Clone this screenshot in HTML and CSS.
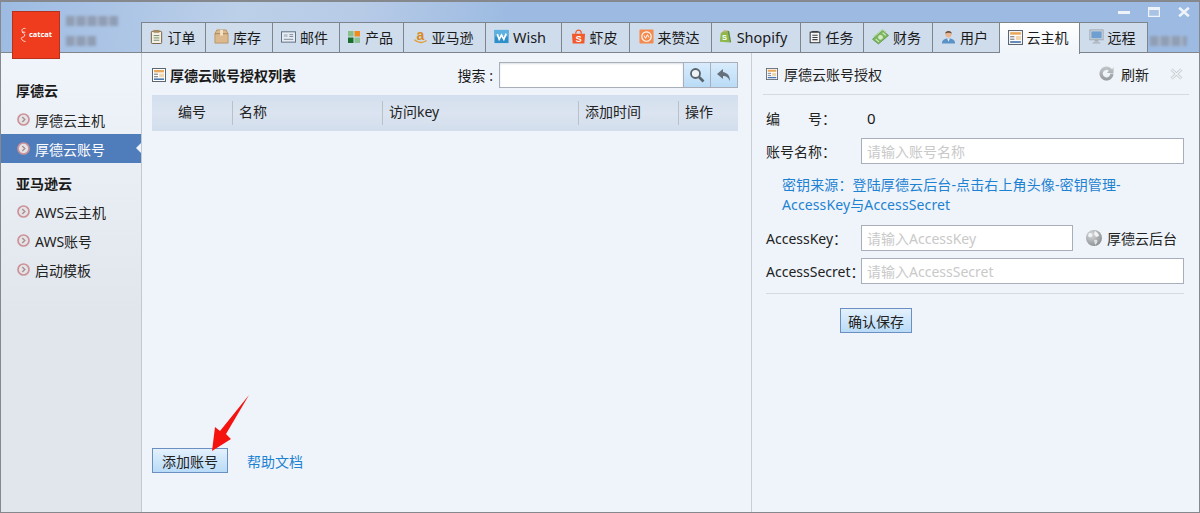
FILE: index.html
```html
<!DOCTYPE html>
<html lang="zh-CN">
<head>
<meta charset="utf-8">
<title>catcat</title>
<link rel="stylesheet" href="styles.css">
</head>
<body>
<svg class="defs" width="0" height="0" aria-hidden="true">
  <defs>
    <radialGradient id="g-globe" cx=".35" cy=".3" r=".8"><stop offset="0" stop-color="#d9dbdd"/><stop offset="1" stop-color="#85898d"/></radialGradient>
    <linearGradient id="g-refresh" x1="0" y1="0" x2="0" y2="1"><stop offset="0" stop-color="#c4c7ca"/><stop offset="1" stop-color="#96999d"/></linearGradient>
  </defs>
  <symbol id="i-panel" viewBox="0 0 14 14">
    <rect x=".5" y=".5" width="13" height="13" fill="#fff" stroke="#5d6670"/>
    <rect x="2" y="2" width="10" height="2.4" fill="#e8a95c"/>
    <rect x="2" y="5.6" width="4" height="1.3" fill="#8b9099"/>
    <rect x="2" y="8" width="4" height="1.3" fill="#8b9099"/>
    <rect x="7.2" y="5.6" width="4.8" height="3.7" fill="#f0d6ae"/>
    <rect x="2" y="10.4" width="10" height="1.6" fill="#4d78ad"/>
  </symbol>
  <symbol id="i-bullet" viewBox="0 0 13 13">
    <circle cx="6.500" cy="6.500" r="5.500" fill="#e4e3e6" stroke="#cc9298" stroke-width="1.700"/>
    <path d="M5.300 4 7.800 6.500 5.300 9" fill="none" stroke="#a98f93" stroke-width="1.400"/>
  </symbol>
</svg>
<div class="window">
  <header class="header">
    <div class="brand">
      <div class="logo">
        <svg class="logo-mark" width="7" height="16" viewBox="0 0 7 16"><path d="M5.500 1.500C3 1 1 2.500 2.500 5s3 2 2 4-4 .5-3 3 4 2.500 4 2.500M2 5.500c2-1 3-.5 3 .5" fill="none" stroke="#fff" stroke-width=".8"/></svg>
        <span class="logo-text">catcat</span>
      </div>
      <div class="brand-info">
        <span class="blur blur-a"></span>
        <span class="blur blur-b"></span>
      </div>
    </div>
    <div class="header-right">
      <div class="winctl">
        <svg width="12" height="10" viewBox="0 0 12 10"><rect y="4" width="12" height="3" fill="#eef3f9"/></svg>
        <svg width="12" height="10" viewBox="0 0 12 10"><rect x=".6" y=".6" width="10.800" height="8.800" fill="#a9c3e4" stroke="#eef3f9" stroke-width="1.200"/><rect x="1" y="1" width="10" height="2" fill="#eef3f9"/></svg>
        <svg width="12" height="10" viewBox="0 0 12 10"><path d="M1.200.8l9.600 8.400M10.800.8l-9.600 8.400" stroke="#eef3f9" stroke-width="2.600"/></svg>
      </div>
      <div class="tabrow">
        <nav class="tabs">
          <a class="tab">
            <svg class="ti" viewBox="0 0 16 16"><rect x="2.500" y="2.500" width="11" height="13" rx="1" fill="#f4efe2" stroke="#6d5a3e"/><rect x="5" y="1" width="6" height="3" fill="#a58a5c"/><path d="M5 7h6M5 9.500h6M5 12h6" stroke="#6f8a6a"/></svg>
            <span>订单</span></a>
          <a class="tab">
            <svg class="ti" viewBox="0 0 16 16"><path d="M1 5 3 1h10l2 4v10H1z" fill="#dcb98c" stroke="#b8966a"/><path d="M1 5h14" stroke="#a98455"/><rect x="6.500" y="1" width="3" height="6" fill="#f3e3c8"/></svg>
            <span>库存</span></a>
          <a class="tab">
            <svg class="ti" viewBox="0 0 16 16"><rect x=".5" y="3" width="15" height="11" fill="#e6ecf3" stroke="#5c6b7c"/><path d="M9 6h4M9 8h4M3 11h10" stroke="#7d8894"/><rect x="3" y="5.500" width="4" height="3" fill="#b7c4d2"/></svg>
            <span>邮件</span></a>
          <a class="tab">
            <svg class="ti ti-sm" viewBox="0 0 14 14"><rect x="1" y="1" width="5.500" height="5.500" fill="#8abf8a"/><rect x="7.500" y="1" width="5.500" height="5.500" fill="#f08c1e"/><rect x="1" y="7.500" width="5.500" height="5.500" fill="#1c6e2d"/><rect x="7.500" y="7.500" width="5.500" height="5.500" fill="#8cc096"/></svg>
            <span>产品</span></a>
          <a class="tab">
            <svg class="ti ti-open" viewBox="0 0 16 16"><text class="amz" x="8" y="11.500" text-anchor="middle">a</text><path d="M1.500 11.500c4 3.500 9 3.500 13 .8" fill="none" stroke="#e59a2c" stroke-width="1.500"/></svg>
            <span>亚马逊</span></a>
          <a class="tab tab-latin">
            <svg class="ti" viewBox="0 0 16 16"><rect x=".5" y="1" width="15" height="14" fill="#2e8fc9"/><rect x=".5" y="1" width="15" height="7" fill="#5cb1e0"/><path d="M3.500 5.500 5.500 11 8 6.500 10.500 11 13 5" fill="none" stroke="#fff" stroke-width="1.800"/></svg>
            <span class="latin">Wish</span></a>
          <a class="tab">
            <svg class="ti ti-open" viewBox="0 0 16 16"><path d="M1 5h14l-.8 10.500H1.800z" fill="#f2592b"/><path d="M5 5c0-5 6-5 6 0" fill="none" stroke="#f2592b" stroke-width="1.300"/><text class="bag-s" x="8" y="13.500" text-anchor="middle">S</text></svg>
            <span>虾皮</span></a>
          <a class="tab">
            <svg class="ti" viewBox="0 0 16 16"><rect x=".5" y=".5" width="15" height="15" rx="1" fill="#f58a4e"/><circle cx="8" cy="8" r="5" fill="none" stroke="#fff" stroke-width="1.200"/><path d="M5.500 7 7 10l2-4 1.500 3" fill="none" stroke="#fff"/></svg>
            <span>来赞达</span></a>
          <a class="tab tab-latin">
            <svg class="ti ti-open" viewBox="0 0 16 16"><path d="M3 4 10 1.500l2.500 13-10.500-1z" fill="#8fb84a"/><path d="M10 1.500l2 1 2 11.500-1.500.5z" fill="#5e8e3e"/><path d="M5 4.500C5 1 9 .5 9 4" fill="none" stroke="#c4a25c"/><text class="bag-s small" x="7" y="12" text-anchor="middle">S</text></svg>
            <span class="latin">Shopify</span></a>
          <a class="tab">
            <svg class="ti ti-sm" viewBox="0 0 16 16"><rect x="2.500" y="2.500" width="11" height="12" fill="#f4f4f2" stroke="#3c3f44" stroke-width="1.200"/><path d="M4 1.800h8" stroke="#3c3f44" stroke-width="1.400"/><path d="M5 6h6M5 8.500h6M5 11h6" stroke="#3c3f44" stroke-width="1.200"/></svg>
            <span>任务</span></a>
          <a class="tab">
            <svg class="ti ti-lg" viewBox="0 0 16 16"><path d="M.5 10.500 10 2.500l5.500 4.500-9.500 8z" fill="#7db661" stroke="#5f9a48" stroke-width=".8"/><path d="M1.500 8.500 10 1.500l3 2.500" fill="none" stroke="#a8d48c"/><circle cx="8" cy="8.800" r="2.200" fill="#d6edc2"/><path d="M3.500 10.500l3 2.500M10 4.500l3 2.500" stroke="#d6edc2"/></svg>
            <span>财务</span></a>
          <a class="tab">
            <svg class="ti" viewBox="0 0 16 16"><path d="M1 15.500c0-4 2.500-5.500 7-5.500s7 1.500 7 5.500z" fill="#5a92c8"/><path d="M6.500 10h3L8 13.500z" fill="#e8eef4"/><circle cx="8" cy="5.500" r="3.300" fill="#e9b48e"/><path d="M4.500 5C4.500 1 11.500 1 11.500 5 10 3.500 6 3.500 4.500 5" fill="#5d4a3c"/></svg>
            <span>用户</span></a>
          <a class="tab active">
            <svg class="ti"><use href="#i-panel"/></svg>
            <span>云主机</span></a>
          <a class="tab">
            <svg class="ti" viewBox="0 0 16 16"><rect x="1" y="1" width="14" height="10.500" fill="#d8dde2" stroke="#9aa2ab"/><rect x="2.500" y="2.500" width="11" height="7.500" fill="#6f9fd0"/><path d="M6 11.500h4v2H6zM4 14h8v1.500H4z" fill="#a9afb6"/></svg>
            <span>远程</span></a>
        </nav>
        <span class="blur blur-c"></span>
      </div>
    </div>
  </header>

  <div class="body">
    <aside class="side">
      <h3 class="side-head first">厚德云</h3>
      <a class="side-item"><svg class="bullet"><use href="#i-bullet"/></svg>厚德云主机</a>
      <a class="side-item current"><svg class="bullet"><use href="#i-bullet"/></svg>厚德云账号</a>
      <h3 class="side-head">亚马逊云</h3>
      <a class="side-item"><svg class="bullet"><use href="#i-bullet"/></svg>AWS云主机</a>
      <a class="side-item"><svg class="bullet"><use href="#i-bullet"/></svg>AWS账号</a>
      <a class="side-item"><svg class="bullet"><use href="#i-bullet"/></svg>启动模板</a>
    </aside>

    <main class="list">
      <div class="list-bar">
        <svg class="panel-icon"><use href="#i-panel"/></svg>
        <h2 class="list-title">厚德云账号授权列表</h2>
        <label class="search-label">搜索 :</label>
        <div class="search">
          <input class="search-input" type="text">
          <button class="search-btn" type="button"><svg width="16" height="16" viewBox="0 0 16 16"><circle cx="6.500" cy="6.500" r="4.500" fill="#eef3f7" stroke="#59636c" stroke-width="1.800"/><path d="m10 10 4.500 4.500" stroke="#59636c" stroke-width="2.600"/></svg></button>
          <button class="search-btn" type="button"><svg width="16" height="14" viewBox="0 0 16 14"><path d="M7 1 1 6l6 5V8c3 0 5 1 7 5 0-5-2-8-7-9z" fill="#66707a"/></svg></button>
        </div>
      </div>
      <div class="thead">
        <span class="th th-id">编号</span>
        <span class="th">名称</span>
        <span class="th">访问key</span>
        <span class="th">添加时间</span>
        <span class="th">操作</span>
      </div>
      <div class="list-empty"></div>
      <div class="list-foot">
        <button class="btn" type="button">添加账号</button>
        <a class="link">帮助文档</a>
        <svg class="arrow" width="40" height="60" viewBox="0 0 40 60"><path d="M37 0 14 39l5 5L0 56l3-24 5 4z" fill="#f5130f"/></svg>
      </div>
    </main>

    <section class="detail">
      <div class="detail-head">
        <svg class="panel-icon small"><use href="#i-panel"/></svg>
        <span class="detail-title">厚德云账号授权</span>
        <svg class="refresh" width="15" height="15" viewBox="0 0 16 16"><path d="M14 3.500A7.500 7.500 0 1 0 15.500 8H12A4 4 0 1 1 10.500 5L8.500 7.500H15.500V1z" fill="url(#g-refresh)"/></svg>
        <span class="refresh-text">刷新</span>
        <svg class="close" width="13" height="12" viewBox="0 0 13 12"><path d="M1.500 1.500l10 9M11.500 1.500l-10 9" stroke="#c4c9ce" stroke-width="3"/><path d="M1.500 1.500l10 9M11.500 1.500l-10 9" stroke="#f0f3f6" stroke-width="1.200"/></svg>
      </div>
      <div class="form">
        <div class="row row-id"><span class="label label-wide"><span>编</span><span>号：</span></span><span class="value">0</span></div>
        <div class="row row-name"><span class="label">账号名称：</span><input class="field" placeholder="请输入账号名称"></div>
        <p class="hint">密钥来源：登陆厚德云后台-点击右上角头像-密钥管理-<br>AccessKey与AccessSecret</p>
        <div class="row row-key"><span class="label">AccessKey：</span><input class="field field-short" placeholder="请输入AccessKey">
          <svg class="globe" width="16" height="16" viewBox="0 0 16 16"><circle cx="8" cy="8" r="8" fill="url(#g-globe)"/><path d="M3 3c3 0 4 1 3 3S3 7 2 6zM9 1c2 1 4 3 4 5l-3 1-2-3z" fill="#f2f3f4"/><path d="M8 10c3-1 4 0 3 3l-2 2z" fill="#dfe1e3"/></svg>
          <a class="console">厚德云后台</a></div>
        <div class="row row-secret"><span class="label">AccessSecret：</span><input class="field" placeholder="请输入AccessSecret"></div>
        <div class="form-foot"><button class="btn btn-save" type="button">确认保存</button></div>
      </div>
    </section>
  </div>
</div>
</body>
</html>
```

FILE: styles.css
```css
* { box-sizing: border-box; }
html, body { margin: 0; height: 100%; }
body {
  font-family: "Noto Sans", "Noto Sans CJK SC", sans-serif;
  font-size: 14px;
  color: #1a1a1a;
  overflow: hidden;
}
.defs { position: absolute; }
a { color: inherit; text-decoration: none; }
h2, h3, p { margin: 0; }

.window {
  height: 513px;
  display: flex;
  flex-direction: column;
  border: 1px solid #85898e;
  border-top-width: 2px;
  background: #eff4fa;
}

.header {
  height: 51px;
  flex: none;
  display: flex;
  border-bottom: 1px solid #81868c;
  background: linear-gradient(102deg, #9dbbe2 0, #a9c3e5 8%, #bcd0e9 20%, #b7cbe7 30%, #9dbbe2 42%, #9dbbe2 100%);
}
.brand { width: 140px; flex: none; display: flex; }
.logo {
  width: 48px;
  height: 48px;
  margin: 9px 0 0 11px;
  flex: none;
  display: flex;
  align-items: center;
  justify-content: center;
  gap: 2px;
  background: #f03c1e;
  border: 1px solid #b7301b;
  position: relative;
  z-index: 2;
}
.logo-text { color: #fff; font-size: 7.500px; font-weight: 700; line-height: 1; }
.brand-info { display: flex; flex-direction: column; gap: 10px; padding: 14px 0 0 6px; }
.blur {
  display: block;
  height: 10px;
  background: repeating-linear-gradient(90deg, #8f9db5 0 8px, #a6b4cb 8px 11px);
  filter: blur(1.500px);
}
.blur-a { width: 52px; }
.blur-b { width: 30px; }
.blur-c { width: 37px; margin: 14px 0 0 2px; }

.header-right { flex: 1; min-width: 0; display: flex; flex-direction: column; }
.winctl { height: 20px; display: flex; justify-content: flex-end; align-items: flex-start; gap: 18px; padding: 5px 9px 0 0; }
.tabrow { display: flex; flex: 1; }
.tabs {
  display: grid;
  grid-template-columns: 64px 67px 67px 64px 82px 76px 68px 82px 89px 63px 69px 67px 80px 68px;
  height: 31px;
  margin-bottom: -1px;
  border-top: 1px solid #7d848c;
  border-left: 1px solid #7d848c;
}
.tab {
  display: flex;
  align-items: center;
  justify-content: center;
  gap: 4px;
  height: 30px;
  padding: 0 3px 2px 0;
  background: #cfdcec;
  border-right: 1px solid #7d848c;
  border-bottom: 1px solid #7d848c;
  font-size: 14px;
  color: #1a1a1a;
}
.tab-latin { padding-right: 7px; }
.tab .latin { font-size: 14.500px; }
.tab.active { background: linear-gradient(#fff, #eff4fa); border-bottom: 0; height: 31px; padding-bottom: 3px; position: relative; z-index: 1; }
.ti { width: 15px; height: 15px; flex: none; }
.ti-sm { width: 14px; height: 14px; }
.ti-lg { width: 17px; height: 17px; }
.ti-open { overflow: visible; }
.amz { font: 700 15px "Liberation Sans", sans-serif; fill: #d98a1e; }
.bag-s { font: 700 10px "Liberation Sans", sans-serif; fill: #fff; }
.bag-s.small { font-size: 8px; }

.body { flex: 1; min-height: 0; display: flex; }

.side {
  width: 141px;
  flex: none;
  padding-top: 22px;
  border-right: 1px solid #c4c9cf;
  background: linear-gradient(#f0f5fb 0, #e1e6ec 260px);
}
.side-head { font-size: 14px; font-weight: 700; padding-left: 15px; }
.side-head.first { height: 30px; line-height: 28px; padding-top: 2px; }
.side-head:not(.first) { line-height: 34px; height: 34px; padding-top: 4px; }
.side-item {
  display: flex;
  align-items: center;
  gap: 5px;
  height: 29px;
  padding-left: 16px;
  font-size: 14px;
  color: #222;
  position: relative;
}
.bullet { width: 13px; height: 13px; flex: none; }
.side-item.current { background: #4f7cba; color: #fff; }
.side-item.current::after {
  content: "";
  position: absolute;
  right: 0;
  top: 9px;
  border: 5.500px solid transparent;
  border-right-color: #eff4fa;
  border-left-width: 0;
}

.list { width: 610px; flex: none; display: flex; flex-direction: column; padding: 0 13px 0 10px; border-right: 1px solid #c9ced4; }
.list-bar { display: flex; align-items: center; height: 42px; padding-top: 2px; }
.panel-icon { width: 14px; height: 14px; flex: none; }
.list-title { font-size: 14px; font-weight: 700; margin-left: 4px; flex: 1; white-space: nowrap; }
.search-label { font-size: 14px; }
.search { display: flex; height: 26px; margin-left: 6px; border: 1px solid #a8afba; }
.search-input { width: 183px; border: 0; padding: 0 6px; background: #fff; box-shadow: inset 0 1px 2px #dcdfe3; outline: 0; }
.search-btn {
  width: 27px;
  padding: 0;
  border: 0;
  border-left: 1px solid #a8afba;
  background: linear-gradient(#d9ecfd, #b9dbf6);
  display: flex;
  align-items: center;
  justify-content: center;
}
.thead {
  height: 36px;
  display: grid;
  grid-template-columns: 80px 150px 196px 100px 1fr;
  align-items: center;
  background: linear-gradient(#d3dfee, #dbe4f0 50%, #d2deed);
}
.th { height: 24px; line-height: 21px; padding-left: 6px; border-left: 1px solid #b9c0c6; font-size: 14px; color: #222; }
.th-id { border-left: 0; padding: 0; text-align: center; }
.list-empty { flex: 1; }
.list-foot { position: relative; display: flex; align-items: center; gap: 19px; height: 25px; margin-bottom: 39px; }
.btn {
  width: 76px;
  height: 25px;
  padding: 0;
  border: 1px solid #6a8fc0;
  background: linear-gradient(#e4f1fc, #b9dbf7);
  font: 14px "Noto Sans", "Noto Sans CJK SC", sans-serif;
  color: #222;
}
.link { color: #1e82d2; font-size: 14px; }
.arrow { position: absolute; left: 60px; top: -53px; }

.detail { flex: 1; min-width: 0; padding: 0 10px 0 11px; }
.detail-head { height: 42px; display: flex; align-items: center; border-bottom: 1px solid #d5dae0; padding-left: 3px; }
.panel-icon.small { width: 12px; height: 12px; }
.detail-title { margin-left: 6px; flex: 1; font-size: 14px; color: #222; }
.refresh { margin-right: 7px; }
.refresh-text { font-size: 14px; color: #222; margin-right: 21px; }
.close { margin-right: 6px; }
.form { padding: 0 5px 0 3px; }
.row { display: flex; align-items: center; }
.label { width: 95px; flex: none; font-size: 14px; white-space: nowrap; color: #222; }
.label-wide { display: flex; width: 70px; justify-content: space-between; }
.value { margin-left: 31px; font-size: 15px; line-height: 20px; }
.row-id { height: 24px; margin-top: 11px; }
.row-name { margin-top: 8px; }
.field {
  flex: 1;
  min-width: 0;
  height: 26px;
  border: 1px solid #a8afba;
  background: #fff;
  padding: 0 5px;
  font: 14px "Noto Sans", "Noto Sans CJK SC", sans-serif;
  outline: 0;
}
.field::placeholder { color: #c9c9c9; }
.field-short { flex: none; width: 212px; }
.hint { margin: 11px 0 0 16px; font-size: 14px; line-height: 20px; color: #1e82d2; white-space: nowrap; letter-spacing: .12px; }
.row-key { margin-top: 10px; }
.globe { margin-left: 13px; flex: none; }
.console { margin-left: 5px; font-size: 14px; color: #222; white-space: nowrap; }
.row-secret { margin-top: 7px; padding-bottom: 9px; border-bottom: 1px solid #d5dae0; }
.form-foot { padding: 14px 0 0 74px; }
.btn-save { width: 72px; }
```
